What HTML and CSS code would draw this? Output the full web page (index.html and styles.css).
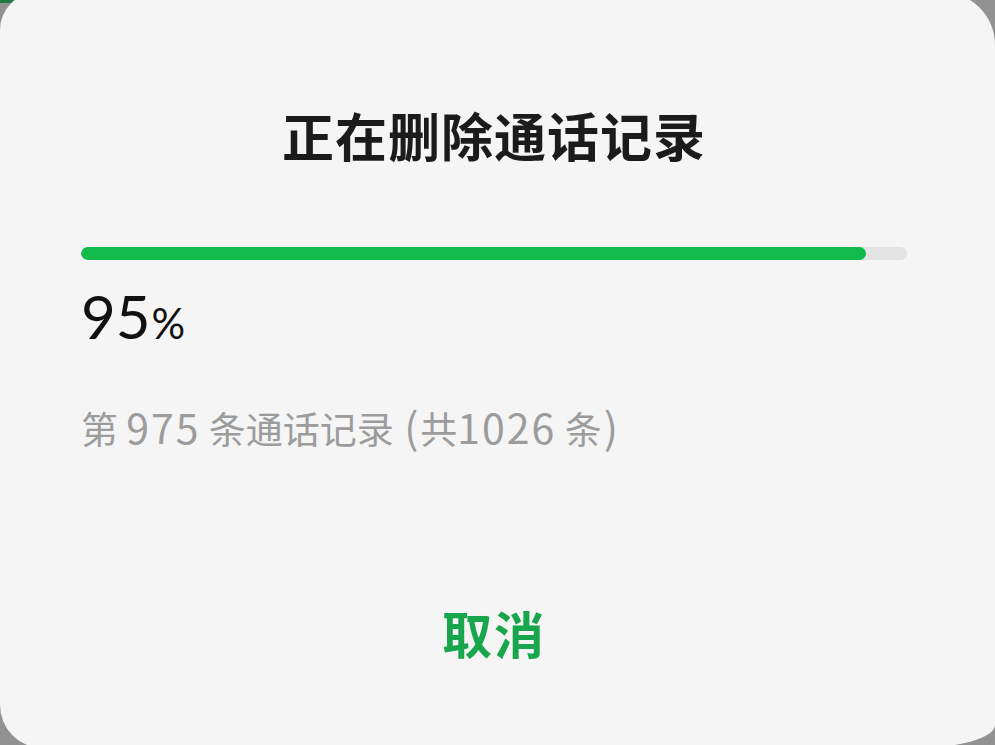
FILE: index.html
```html
<!DOCTYPE html>
<html lang="zh-CN">
<head>
<meta charset="utf-8">
<title>正在删除通话记录</title>
<link rel="stylesheet" href="styles.css">
</head>
<body>
  <div class="dialog">
    <h1 class="dialog-title">正在删除通话记录</h1>
    <div class="progress">
      <div class="progress-fill" style="width: 95%"></div>
    </div>
    <div class="percent"><span class="percent-num">95</span><span class="percent-sign">%</span></div>
    <p class="detail">第 <span class="num">975</span> 条通话记录 <span class="paren">(</span>共<span class="num">1026</span> 条<span class="paren">)</span></p>
    <div class="actions">
      <button class="btn-cancel" type="button">取消</button>
    </div>
  </div>
</body>
</html>
```

FILE: styles.css
```css
html, body {
  margin: 0;
  padding: 0;
  width: 995px;
  height: 745px;
  overflow: hidden;
}

body {
  background:
    linear-gradient(#1f7a42, #1f7a42) no-repeat 0 0 / 22px 3px,
    #929292;
  font-family: "Noto Sans CJK SC", "Noto Sans", sans-serif;
}

.dialog {
  box-sizing: border-box;
  width: 995px;
  height: 756px;
  margin-top: -8px;
  background: #f5f5f5;
  border-radius: 38px 53px 79px 43px / 38px 53px 23px 43px;
  padding: 117px 88px 0 81px;
  display: flex;
  flex-direction: column;
}

.dialog-title {
  margin: 0;
  font-size: 52px;
  line-height: 52px;
  font-weight: 700;
  color: #1b1b1b;
  text-align: center;
  letter-spacing: 1px;
}

.progress {
  margin-top: 86px;
  height: 13px;
  border-radius: 7px;
  background: #e3e3e3;
  overflow: hidden;
}

.progress-fill {
  height: 100%;
  border-radius: 7px;
  background: #12b94b;
}

.percent {
  margin-top: 26px;
  height: 60px;
  line-height: 60px;
  font-family: Lato, "Noto Sans", sans-serif;
  color: #111;
}

.percent-num {
  font-size: 60px;
}

.percent-sign {
  font-size: 42px;
  margin-left: 1px;
}

.detail {
  margin: 61px 0 0;
  font-size: 37px;
  line-height: 37px;
  color: #9c9c9c;
  font-weight: 400;
  white-space: nowrap;
}

.detail .num {
  font-size: 41px;
  letter-spacing: 2px;
}

.detail .paren {
  font-size: 42px;
  margin: 0 2px;
}

.actions {
  margin-top: 160px;
  display: flex;
  justify-content: center;
}

.btn-cancel {
  border: 0;
  background: none;
  padding: 0;
  font-family: "Noto Sans CJK SC", sans-serif;
  font-size: 50px;
  line-height: 50px;
  font-weight: 700;
  color: #17a64b;
  letter-spacing: 2px;
}
```
